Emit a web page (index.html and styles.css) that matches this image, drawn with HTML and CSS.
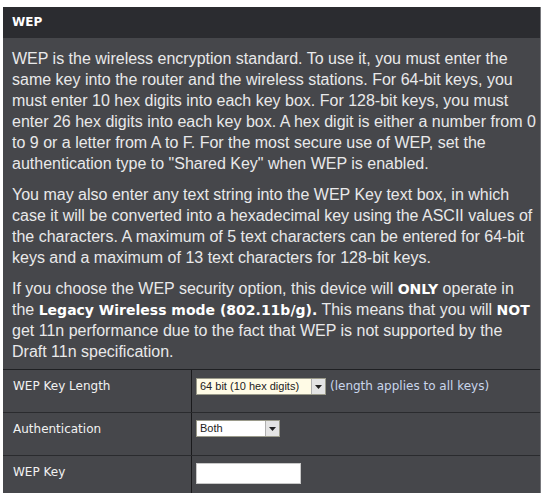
FILE: index.html
```html
<!DOCTYPE html>
<html>
<head>
<meta charset="utf-8">
<link rel="stylesheet" href="styles.css">
</head>
<body>
<div class="panel">
  <div class="head">WEP</div>
  <div class="body">
    <p>WEP is the wireless encryption standard. To use it, you must enter the<br>same key into the router and the wireless stations. For 64-bit keys, you<br>must enter 10 hex digits into each key box. For 128-bit keys, you must<br>enter 26 hex digits into each key box. A hex digit is either a number from 0<br>to 9 or a letter from A to F. For the most secure use of WEP, set the<br>authentication type to "Shared Key" when WEP is enabled.</p>
    <p>You may also enter any text string into the WEP Key text box, in which<br>case it will be converted into a hexadecimal key using the ASCII values of<br>the characters. A maximum of 5 text characters can be entered for 64-bit<br>keys and a maximum of 13 text characters for 128-bit keys.</p>
    <p>If you choose the WEP security option, this device will <b>ONLY</b> operate in<br>the <b>Legacy Wireless mode (802.11b/g).</b> This means that you will <b>NOT</b><br>get 11n performance due to the fact that WEP is not supported by the<br>Draft 11n specification.</p>
  </div>
  <div class="table">
    <div class="row">
      <div class="label">WEP Key Length</div>
      <div class="value">
        <div class="select sel-len"><span class="sel-text">64 bit (10 hex digits)</span><span class="arrow"><svg width="7" height="4" viewBox="0 0 7 4"><path d="M0 0H7L3.5 4Z" fill="#222"/></svg></span></div>
        <span class="note">(length applies to all keys)</span>
      </div>
    </div>
    <div class="row">
      <div class="label">Authentication</div>
      <div class="value">
        <div class="select sel-auth"><span class="sel-text">Both</span><span class="arrow"><svg width="7" height="4" viewBox="0 0 7 4"><path d="M0 0H7L3.5 4Z" fill="#222"/></svg></span></div>
      </div>
    </div>
    <div class="row last">
      <div class="label">WEP Key</div>
      <div class="value">
        <div class="input"></div>
      </div>
    </div>
  </div>
</div>
</body>
</html>
```

FILE: styles.css
```css
html, body {
  margin: 0;
  padding: 0;
  background: #ffffff;
}
body {
  padding: 7px 7px 0 3px;
  font-family: "DejaVu Sans", Verdana, sans-serif;
}
.panel {
  width: 538px;
  background: #46474b;
  border-right: 1px solid #77787c;
  box-sizing: border-box;
  color: #eeeeee;
}
.head {
  height: 31px;
  background: #2b2c30;
  color: #ffffff;
  font-weight: bold;
  font-size: 12px;
  line-height: 31px;
  padding-left: 9px;
}
.body {
  padding: 10px 0 7px 9px;
  font-family: "Liberation Sans", Arial, sans-serif;
  font-size: 16px;
  line-height: 21px;
  white-space: nowrap;
  color: #e9e9ea;
}
.body p {
  margin: 0 0 10px 0;
}
.body p:last-child {
  margin-bottom: 0;
}
.body b {
  color: #ffffff;
  font-family: "DejaVu Sans", Verdana, sans-serif;
  font-size: 14px;
  line-height: 1;
}
.table {
  border-top: 1px solid #1f2023;
}
.row {
  display: grid;
  grid-template-columns: 189px 1fr;
  height: 42px;
  border-bottom: 1px solid #2a2b2e;
}
.row.last {
  border-bottom: none;
  height: 38px;
}
.label {
  border-right: 1px solid #1a1a1c;
  padding: 8px 0 0 10px;
  font-size: 12px;
  line-height: 16px;
  color: #f2f2f2;
}
.value {
  display: flex;
  align-items: flex-start;
  padding: 7px 0 0 4px;
  gap: 4px;
}
.select {
  display: flex;
  align-items: stretch;
  height: 17px;
  box-sizing: border-box;
  border: 1px solid #9a9a8a;
  font-family: "Liberation Sans", Arial, sans-serif;
  font-size: 11px;
  color: #222;
}
.sel-len {
  width: 130px;
  background: #fffbe6;
  margin-top: 1px;
}
.sel-auth {
  width: 84px;
  background: #ffffff;
}
.sel-text {
  flex: 1;
  padding-left: 3px;
  line-height: 15px;
}
.arrow {
  width: 13px;
  background: #e4e4e4;
  border-left: 1px solid #b0b0b0;
  display: flex;
  align-items: center;
  justify-content: center;
}
.note {
  font-size: 12px;
  line-height: 18px;
  color: #c9d6ec;
}
.input {
  width: 105px;
  height: 21px;
  background: #ffffff;
  border: 1px solid #c8c8c8;
  box-sizing: border-box;
}
```
